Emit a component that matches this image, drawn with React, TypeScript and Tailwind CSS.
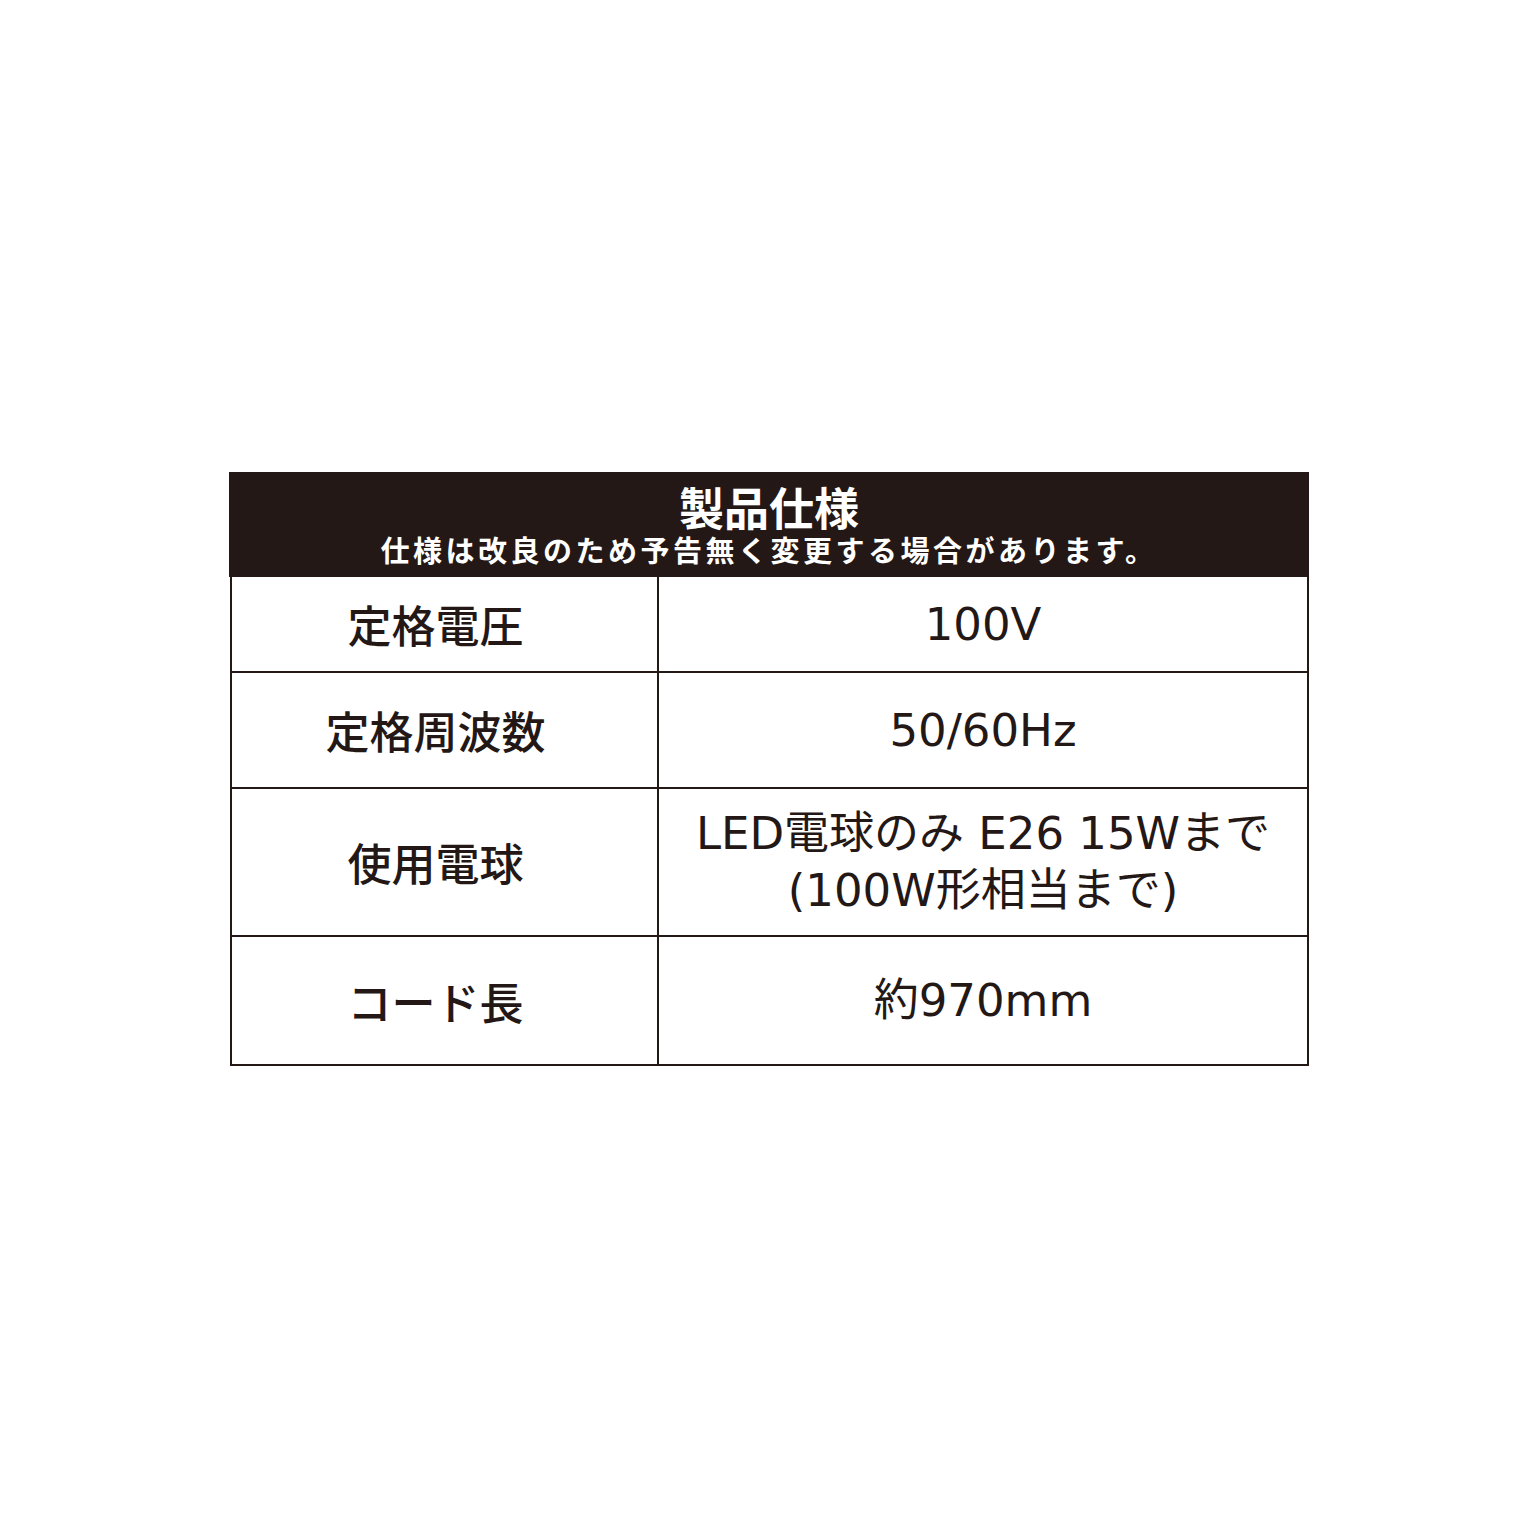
const FONT = { fontFamily: '"Noto Sans CJK JP", "Noto Sans", sans-serif' };
const VALUE_FONT = { fontFamily: '"DejaVu Sans", "Noto Sans CJK JP", sans-serif' };

const ROWS: { label: string; value: string[]; h: string }[] = [
  { label: "定格電圧", value: ["100V"], h: "h-[96px]" },
  { label: "定格周波数", value: ["50/60Hz"], h: "h-[116px]" },
  { label: "使用電球", value: ["LED電球のみ E26 15Wまで", "(100W形相当まで)"], h: "h-[148px]" },
  { label: "コード長", value: ["約970mm"], h: "h-[127px]" },
];

export default function App() {
  return (
    <div className="min-h-[1536px] bg-white pt-[472px]" style={FONT}>
      <div className="ml-[229px] w-[1080px]">
        <div className="flex h-[105px] flex-col items-center justify-center bg-[#231815] text-white">
          <div className="text-[45px] font-bold leading-[42px]">製品仕様</div>
          <div className="mt-[6px] text-[29px] font-bold leading-[30px] tracking-[3.5px]">
            仕様は改良のため予告無く変更する場合があります。
          </div>
        </div>
        <div className="ml-[1px] border-x-2 border-b-2 border-[#231815]">
          {ROWS.map((r, i) => (
            <div
              key={r.label}
              className={`grid grid-cols-[427px_1fr] ${r.h} ${i < ROWS.length - 1 ? "border-b-2 border-[#231815]" : ""}`}
            >
              <div className="flex items-center justify-center border-r-2 border-[#231815] pr-[18px] text-[44px] font-medium text-[#231815]">
                {r.label}
              </div>
              <div
                className="flex flex-col items-center justify-center text-[45px] leading-[57px] text-[#231815]"
                style={VALUE_FONT}
              >
                {r.value.map((v) => (
                  <div key={v}>{v}</div>
                ))}
              </div>
            </div>
          ))}
        </div>
      </div>
    </div>
  );
}
